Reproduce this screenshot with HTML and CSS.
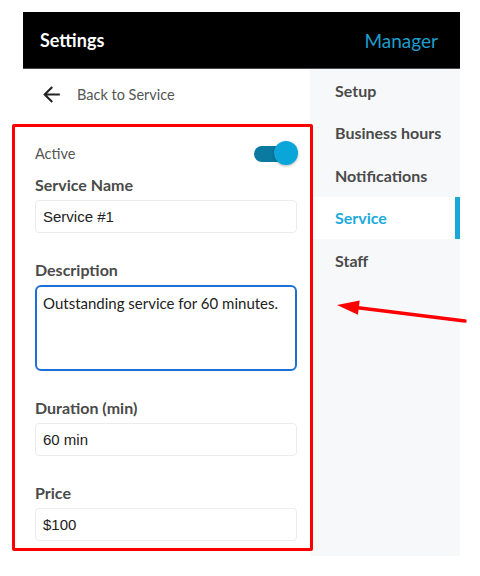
FILE: index.html
```html
<!DOCTYPE html>
<html lang="en">
<head>
<meta charset="utf-8">
<title>Settings</title>
<link rel="stylesheet" href="styles.css">
</head>
<body>
<div class="app">
  <header class="topbar">
    <span class="title">Settings</span>
    <span class="role">Manager</span>
  </header>
  <div class="main">
    <section class="pane">
      <div class="back">
        <svg class="back-icon" viewBox="0 0 24 24" width="25" height="25"><path d="M20 11H7.83l5.59-5.59L12 4l-8 8 8 8 1.41-1.41L7.83 13H20v-2z" fill="#222"/></svg>
        <span>Back to Service</span>
      </div>
      <form class="form">
        <div class="active-row">
          <span class="active-label">Active</span>
          <span class="switch"><span class="track"></span><span class="knob"></span></span>
        </div>
        <div class="field first">
          <label class="label">Service Name</label>
          <div class="input">Service #1</div>
        </div>
        <div class="field">
          <label class="label">Description</label>
          <div class="textarea">Outstanding service for 60 minutes.</div>
        </div>
        <div class="field">
          <label class="label">Duration (min)</label>
          <div class="input">60 min</div>
        </div>
        <div class="field">
          <label class="label">Price</label>
          <div class="input">$100</div>
        </div>
      </form>
    </section>
    <nav class="side">
      <div class="item">Setup</div>
      <div class="item">Business hours</div>
      <div class="item">Notifications</div>
      <div class="item current">Service</div>
      <div class="item">Staff</div>
    </nav>
  </div>
</div>
<div class="highlight"></div>
<svg class="pointer" width="480" height="576" viewBox="0 0 480 576">
  <line x1="465" y1="321" x2="356" y2="307.5" stroke="#f00" stroke-width="3.5" stroke-linecap="round"/>
  <polygon points="337,305 359.7,300.6 357.9,314.8" fill="#f00"/>
</svg>
</body>
</html>
```
FILE: styles.css
```css
html, body {
  margin: 0;
  padding: 0;
  background: #ffffff;
}
body {
  font-family: Lato, "Open Sans", Arial, sans-serif;
  position: relative;
  width: 480px;
  height: 576px;
  overflow: hidden;
}
.app {
  margin: 12px 0 0 23px;
  width: 437px;
}
.topbar {
  height: 56px;
  background: #000;
  border-bottom: 1px solid #4a4a4a;
  display: flex;
  align-items: center;
  justify-content: space-between;
  padding: 0 22px 0 17px;
}
.title {
  color: #fff;
  font-size: 18px;
  font-weight: 700;
}
.role {
  color: #1c9ecb;
  font-size: 19px;
}
.main {
  display: grid;
  grid-template-columns: 287px 150px;
  height: 487px;
}
.pane {
  background: #fff;
}
.back {
  height: 50px;
  display: flex;
  align-items: center;
  padding-left: 16px;
  color: #555;
  font-size: 14.5px;
}
.back-icon {
  display: block;
  margin-right: 13px;
}
.form {
  padding: 22px 13px 0 12px;
}
.active-row {
  height: 24px;
  display: flex;
  align-items: center;
  justify-content: space-between;
}
.active-label {
  color: #555;
  font-size: 14.5px;
}
.switch {
  position: relative;
  width: 44px;
  height: 24px;
  margin-right: -1px;
}
.track {
  position: absolute;
  left: 0;
  top: 5px;
  width: 40px;
  height: 16px;
  border-radius: 8px;
  background: #0b7aa0;
}
.knob {
  position: absolute;
  right: 0;
  top: 0;
  width: 24px;
  height: 24px;
  border-radius: 50%;
  background: #0aa6da;
  box-shadow: 0 1px 3px rgba(0,0,0,0.3);
}
.field {
  margin-top: 27px;
}
.field.first {
  margin-top: 10px;
}
.label {
  display: block;
  height: 20px;
  line-height: 20px;
  font-size: 16px;
  font-weight: 700;
  color: #4a4a4a;
  margin-bottom: 5px;
}
.input {
  box-sizing: border-box;
  height: 33px;
  border: 1px solid #ececec;
  border-radius: 4px;
  padding: 0 7px;
  display: flex;
  align-items: center;
  font-family: "Liberation Sans", Arial, sans-serif;
  font-size: 15px;
  color: #222;
}
.textarea {
  box-sizing: border-box;
  height: 86px;
  border: 2px solid #1f6fd8;
  border-radius: 6px;
  padding: 7px 6px;
  font-size: 15px;
  line-height: 18px;
  color: #222;
}
.side {
  background: #f7f8fa;
}
.item {
  box-sizing: border-box;
  height: 42.5px;
  display: flex;
  align-items: center;
  padding-left: 25px;
  font-size: 16px;
  font-weight: 700;
  color: #4a4a4a;
}
.item.current {
  background: #fff;
  color: #1eaadb;
  border-right: 5px solid #1aa8d9;
}
.highlight {
  position: absolute;
  left: 12px;
  top: 124px;
  width: 295px;
  height: 421px;
  border: 3px solid #ff0000;
  border-radius: 2px;
}
.pointer {
  position: absolute;
  left: 0;
  top: 0;
}
```
